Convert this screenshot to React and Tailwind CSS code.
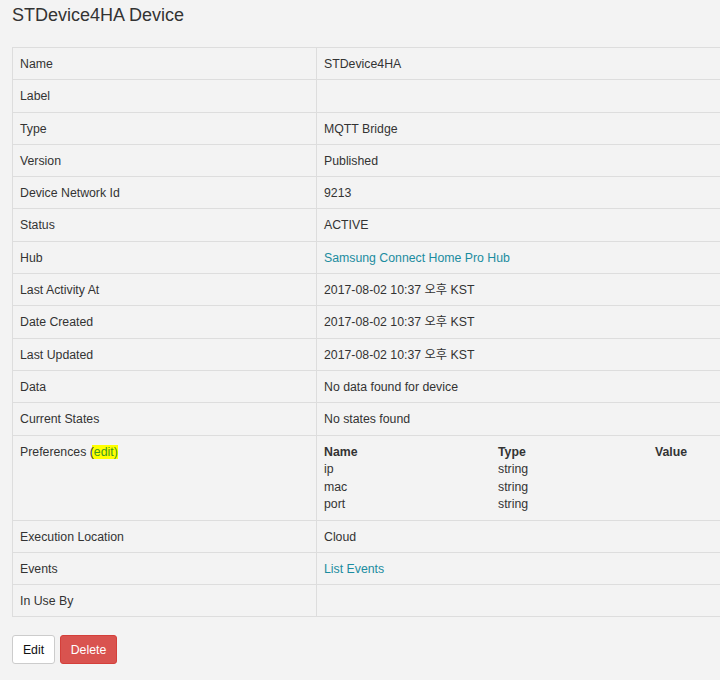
import React from "react";

const font = { fontFamily: '"Liberation Sans", Arial, "Noto Sans CJK KR", sans-serif' };

function Row({ label, children }) {
  return (
    <div className="flex border-t border-[#dddddd]">
      <div className="w-[304px] shrink-0 border-l border-[#dddddd] pl-[7px] pr-[8px] pt-[8px] pb-[6px] leading-[17.3px]">
        {label}
      </div>
      <div className="flex-1 border-l border-[#dddddd] pl-[7px] pr-[8px] pt-[8px] pb-[6px] leading-[17.3px]">
        {children}
      </div>
    </div>
  );
}

const link = "text-[#1b8ca0]";

export default function App() {
  return (
    <div className="min-h-[680px] w-full overflow-hidden bg-[#f3f3f3] text-[12.3px] text-[#333333]" style={font}>
      <div className="px-[12px]">
        <h1 className="pt-[4px] text-[18px] leading-[22px] text-[#333333]">STDevice4HA Device</h1>
        <div className="mt-[21px] w-[780px] border-b border-[#dddddd]">
          <Row label="Name">STDevice4HA</Row>
          <Row label="Label">{"\u00a0"}</Row>
          <Row label="Type">MQTT Bridge</Row>
          <Row label="Version">Published</Row>
          <Row label="Device Network Id">9213</Row>
          <Row label="Status">ACTIVE</Row>
          <Row label="Hub"><span className={link}>Samsung Connect Home Pro Hub</span></Row>
          <Row label="Last Activity At">2017-08-02 10:37 오후 KST</Row>
          <Row label="Date Created">2017-08-02 10:37 오후 KST</Row>
          <Row label="Last Updated">2017-08-02 10:37 오후 KST</Row>
          <Row label="Data">No data found for device</Row>
          <Row label="Current States">No states found</Row>
          <div className="flex border-t border-[#dddddd]">
            <div className="w-[304px] shrink-0 border-l border-[#dddddd] pl-[7px] pr-[8px] pt-[8px] leading-[17.3px]">
              Preferences <span className="relative">(</span><span className="bg-[#ffff00] text-[#3d9a1e] ml-[-2px] pl-[2px]">edit)</span>
            </div>
            <div className="flex-1 border-l border-[#dddddd] pl-[7px] pr-[8px] pt-[8px] pb-[6px] leading-[17.5px]">
              <div className="grid grid-cols-[174px_157px_1fr]">
                <div className="font-bold">Name</div>
                <div className="font-bold">Type</div>
                <div className="font-bold">Value</div>
                <div>ip</div>
                <div>string</div>
                <div></div>
                <div>mac</div>
                <div>string</div>
                <div></div>
                <div>port</div>
                <div>string</div>
                <div></div>
              </div>
            </div>
          </div>
          <Row label="Execution Location">Cloud</Row>
          <Row label="Events"><span className={link}>List Events</span></Row>
          <Row label="In Use By">{"\u00a0"}</Row>
        </div>
        <div className="mt-[18px] flex gap-[5px]">
          <button className="h-[29px] w-[43px] rounded-[3px] border border-[#cccccc] bg-white text-[12.3px] text-[#111111]">
            Edit
          </button>
          <button className="h-[29px] w-[57px] rounded-[3px] border border-[#d43f3a] bg-[#d9534f] text-[12.3px] text-white">
            Delete
          </button>
        </div>
      </div>
    </div>
  );
}
